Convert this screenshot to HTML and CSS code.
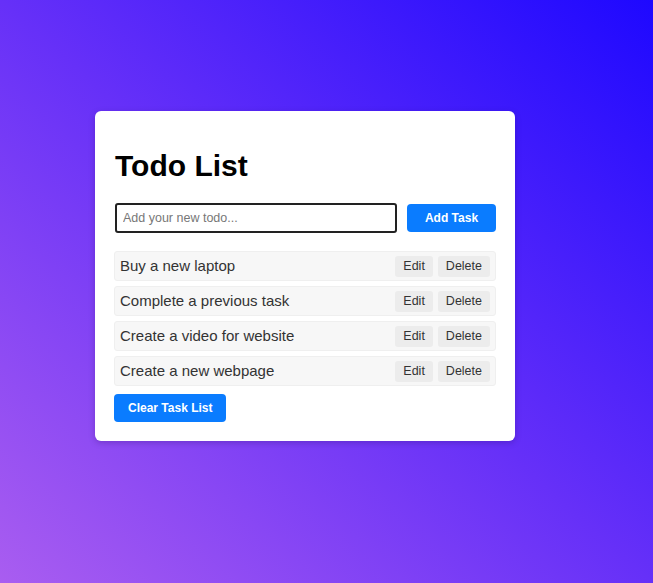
FILE: index.html
```html
<!DOCTYPE html>
<html lang="en">
<head>
<meta charset="utf-8">
<title>Todo List</title>
<link rel="stylesheet" href="styles.css">
</head>
<body>
<main class="page">
  <section class="card">
    <h1 class="title">Todo List</h1>
    <div class="add-row">
      <input class="todo-input" type="text" placeholder="Add your new todo...">
      <button class="btn-primary add-btn">Add Task</button>
    </div>
    <ul class="list">
      <li class="item"><span class="item-text">Buy a new laptop</span><span class="actions"><button class="btn-small">Edit</button><button class="btn-small">Delete</button></span></li>
      <li class="item"><span class="item-text">Complete a previous task</span><span class="actions"><button class="btn-small">Edit</button><button class="btn-small">Delete</button></span></li>
      <li class="item"><span class="item-text">Create a video for website</span><span class="actions"><button class="btn-small">Edit</button><button class="btn-small">Delete</button></span></li>
      <li class="item"><span class="item-text">Create a new webpage</span><span class="actions"><button class="btn-small">Edit</button><button class="btn-small">Delete</button></span></li>
    </ul>
    <button class="btn-primary clear-btn">Clear Task List</button>
  </section>
</main>
</body>
</html>
```
FILE: styles.css
```css
* { box-sizing: border-box; }
html, body { margin: 0; height: 100%; }
body {
  font-family: "Liberation Sans", Arial, sans-serif;
  background: linear-gradient(to top right, #a95df0 0%, #6630f8 50%, #1e08ff 100%);
  min-height: 583px;
}
.page {
  padding: 111px 0 0 95px;
  display: flex;
  align-items: flex-start;
}
.card {
  width: 420px;
  background: #fff;
  border-radius: 6px;
  padding: 20px 19px 19px 19px;
  box-shadow: 0 2px 6px rgba(40, 0, 90, 0.25);
  display: flex;
  flex-direction: column;
  align-items: flex-start;
}
.title {
  margin: 18px 0 20px 1px;
  font-size: 30px;
  font-weight: bold;
  color: #000;
  line-height: 34px;
}
.add-row {
  display: flex;
  align-items: center;
  gap: 10px;
  width: 100%;
  padding-left: 1px;
}
.todo-input {
  width: 282px;
  height: 30px;
  border: 2px solid #222;
  border-radius: 3px;
  padding: 0 6px;
  font-family: "Liberation Sans", Arial, sans-serif;
  font-size: 12.5px;
  color: #333;
  outline: none;
}
.todo-input::placeholder { color: #777; }
.btn-primary {
  background: #0a7cff;
  color: #fff;
  border: none;
  border-radius: 4px;
  font-family: "Liberation Sans", Arial, sans-serif;
  font-size: 12px;
  font-weight: bold;
  height: 28px;
  padding: 0 14px;
  white-space: nowrap;
}
.add-btn { width: 89px; }
.list {
  list-style: none;
  margin: 18px 0 0 0;
  padding: 0;
  width: 100%;
  display: flex;
  flex-direction: column;
  gap: 5px;
}
.item {
  height: 30px;
  background: #f7f7f7;
  border: 1px solid #efefef;
  border-radius: 3px;
  display: flex;
  align-items: center;
  justify-content: space-between;
  padding: 0 5px 0 5px;
}
.item-text {
  font-size: 15px;
  color: #333;
  line-height: 17px;
  margin-top: -2px;
}
.actions {
  display: flex;
  gap: 5px;
}
.btn-small {
  background: #ececec;
  border: none;
  border-radius: 3px;
  color: #333;
  font-family: "Liberation Sans", Arial, sans-serif;
  font-size: 12.5px;
  height: 21px;
  padding: 0 8px;
}
.clear-btn {
  margin-top: 8px;
}
```
